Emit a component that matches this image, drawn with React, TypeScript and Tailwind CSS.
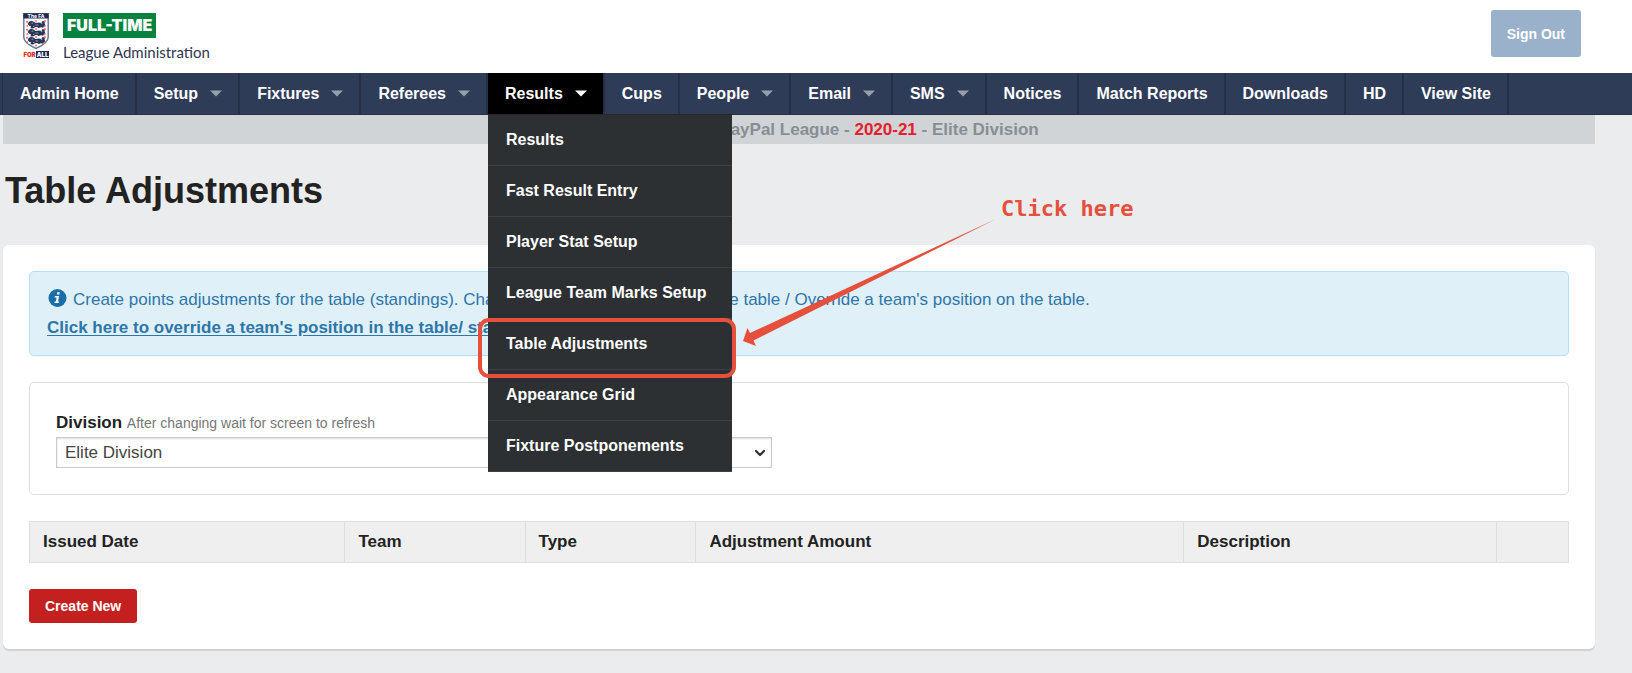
import React from 'react';
import { ChevronDown } from 'lucide-react';

interface NavItem {
  label: string;
  hasMenu?: boolean;
}

const navItems: NavItem[] = [
  { label: 'Admin Home' },
  { label: 'Setup', hasMenu: true },
  { label: 'Fixtures', hasMenu: true },
  { label: 'Referees', hasMenu: true },
  { label: 'Results', hasMenu: true },
  { label: 'Cups' },
  { label: 'People', hasMenu: true },
  { label: 'Email', hasMenu: true },
  { label: 'SMS', hasMenu: true },
  { label: 'Notices' },
  { label: 'Match Reports' },
  { label: 'Downloads' },
  { label: 'HD' },
  { label: 'View Site' },
];

const resultsMenu = [
  'Results',
  'Fast Result Entry',
  'Player Stat Setup',
  'League Team Marks Setup',
  'Table Adjustments',
  'Appearance Grid',
  'Fixture Postponements',
];

const columns = [
  { label: 'Issued Date', width: 'w-[20.5%]' },
  { label: 'Team', width: 'w-[11.7%]' },
  { label: 'Type', width: 'w-[11.1%]' },
  { label: 'Adjustment Amount', width: 'w-[31.7%]' },
  { label: 'Description', width: 'w-[20.3%]' },
  { label: '', width: 'w-[4.7%]' },
];

const Lion: React.FC<{ y: number }> = ({ y }) => (
  <g transform={`translate(0 ${y})`}>
    <path
      d="M3.600 4 5 1.800 7.400.8l2.400 1 1.800 1.200 3.200-.4 2.600.4L18.600 1l2.400.4-.4 1.800.9 2.200-1.700 1-.6 1.400-2.200-.6-2.400.9-1.600-1.200-2 .3-1.800 1.300-2.800-.3.800-1.800-2-.6z"
      fill="#2a3558"
    />
    <path d="M7.400 3.200h1.800M11.600 5h2.600M16.800 3.600h1.600M9 6.400h1.400" stroke="#aeb5c6" strokeWidth=".8" />
    <circle cx="3" cy="1.800" r="1.100" fill="#f0746c" />
    <circle cx="21" cy="1" r="1.100" fill="#f0746c" />
    <circle cx="12" cy=".9" r="1" fill="#f0746c" />
    <circle cx="3.400" cy="6" r=".9" fill="#f0746c" />
    <circle cx="20.600" cy="6.400" r=".9" fill="#f0746c" />
  </g>
);

const Crest = () => (
  <div className="flex w-[26px] flex-col items-center font-[Inter,sans-serif]">
    <div className="relative">
      <svg width="26" height="36" viewBox="0 0 26 36" aria-hidden="true">
        <path d="M.8.5h24.4v24c0 5-5.500 8-12.200 11C6.300 32.500.8 29.500.8 24.500z" fill="#fff" stroke="#66718f" strokeWidth="1.400" />
        <path d="M.4.3h25.200v5.200H.4z" fill="#1d2b52" />
        <g transform="translate(1 7)">
          <Lion y={0} />
          <Lion y={8} />
          <Lion y={16} />
        </g>
        <circle cx="13" cy="32.600" r="1" fill="#f0746c" />
      </svg>
      <span className="absolute inset-x-0 top-0 text-center text-[5px] leading-[6px] font-bold text-white">The FA</span>
    </div>
    <div className="mt-[2px] flex w-full text-[6px] leading-[7px] font-black">
      <span className="flex-1 text-center text-[#e8261c]">FOR</span>
      <span className="flex-1 bg-[#1d2b52] text-center text-white">ALL</span>
    </div>
  </div>
);

const Caret: React.FC<{ active: boolean }> = ({ active }) => (
  <svg width="12" height="7" viewBox="0 0 12 7" className={active ? 'text-white' : 'text-[#979eac]'} aria-hidden="true">
    <path d="M0 .5h12L6 6.500z" fill="currentColor" />
  </svg>
);

/* Callout drawn around one entry of the open menu */
const Callout = () => (
  <>
    <span className="pointer-events-none absolute -top-px -right-1 -bottom-[9px] -left-[10px] z-20 rounded-[11px] border-4 border-[#e64f3b]" />
    <svg
      width="260"
      height="132"
      viewBox="0 0 260 132"
      className="pointer-events-none absolute -top-[102px] left-[251px] z-20"
      aria-hidden="true"
    >
      <path d="M4 124 8.500 111 11 116 257 2 14.500 123.500 17 129z" fill="#e64f3b" />
    </svg>
    <span className="pointer-events-none absolute -top-[124px] left-[513px] z-20 font-['DejaVu_Sans_Mono',monospace] text-[22px] leading-7 font-bold whitespace-nowrap text-[#e64f3b]">
      Click here
    </span>
  </>
);

const ResultsMenu = () => (
  <ul className="absolute top-full left-0 z-10 w-[244px] border-t border-[#26282b] bg-[#2d3033]">
    {resultsMenu.map((label) => (
      <li key={label} className="relative border-b border-[#3e4144]">
        <a href="#" className="flex h-[50px] items-center pl-[18px] text-white">
          {label}
        </a>
        {label === 'Table Adjustments' && <Callout />}
      </li>
    ))}
  </ul>
);

const MainNav = () => (
  <nav className="border-b border-[#26324a] bg-[#2f3c58] pl-[2px] text-base font-bold">
    <ul className="flex border-l border-[#253047]">
      {navItems.map(({ label, hasMenu }) => {
        const active = label === 'Results';
        return (
          <li key={label} className="relative border-r-2 border-[#253047]">
            <a
              href="#"
              className={`flex h-[41px] items-center gap-3 pr-4 pl-[17px] whitespace-nowrap text-white ${active ? 'bg-black' : ''}`}
            >
              {label}
              {hasMenu && <Caret active={active} />}
            </a>
            {active && <ResultsMenu />}
          </li>
        );
      })}
    </ul>
  </nav>
);

const App = () => {
  return (
    <div className="min-h-screen bg-[#ebeced] font-['Liberation_Sans',Arial,sans-serif] text-[17px] leading-7 text-[#222]">
      <header className="flex items-start justify-between bg-white pr-[51px] pb-[7px] pl-[23px]">
        <a href="#" className="flex gap-[14px] pt-[13px]">
          <Crest />
          <span className="flex flex-col items-start">
            <span className="bg-[#06843f] px-1 font-[Inter,sans-serif] text-base leading-[25px] font-black text-white">FULL-TIME</span>
            <span className="font-[Lato,sans-serif] text-[15px] leading-7 text-[#2f3652]">League Administration</span>
          </span>
        </a>
        <button className="mt-[10px] h-[47px] rounded-[3px] bg-[#9ab1cb] px-4 text-sm font-bold text-white">Sign Out</button>
      </header>

      <MainNav />

      <main className="mr-[37px] ml-[3px]">
        <div className="bg-[#d0d4d6] pl-[160px] text-center leading-[29px] font-bold text-[#878e95]">
          PayPal League - <span className="text-[#e3202b]">2020-21</span> - Elite Division
        </div>

        <h1 className="pt-6 pb-8 pl-[2px] text-4xl leading-[45px] font-bold">Table Adjustments</h1>

        <div className="flex flex-col items-start gap-[26px] rounded-md bg-white p-[26px] shadow-[0_2px_1px_#cfd1d3]">
          <div className="w-full rounded-[5px] border border-[#b6def4] bg-[#dff0f9] px-[17px] pt-[14px] pb-[13px] text-[#2d76a8]">
            <p>
              <svg width="20" height="20" viewBox="0 0 20 20" className="mr-[6px] mb-[6px] inline-block" aria-hidden="true">
                <circle cx="10.500" cy="10" r="9" fill="#1a6ea8" />
                <path d="M10.300 4.300h2.500l-.5 2.200H9.800zM8 8h4.200l-1.300 5.400h1.200l-.4 1.600H7.400l.4-1.600h1L9.700 9.600H7.600z" fill="#fff" />
              </svg>
              Create points adjustments for the table (standings). Changes a team's points total on the table / Override a
              team's position on the table.
            </p>
            <a href="#" className="font-bold underline underline-offset-2">
              Click here to override a team's position in the table/ standings
            </a>
          </div>

          <div className="w-full rounded-[5px] border border-[#dfe0e1] p-[26px]">
            <label htmlFor="division" className="block">
              <span className="font-bold">Division</span> <span className="text-sm text-[#777]">After changing wait for screen to refresh</span>
            </label>
            <div className="relative w-[716px] max-w-full">
              <select
                id="division"
                className="block h-[31px] w-full appearance-none border border-[#c9cacb] bg-white px-2 leading-6 text-[#444] shadow-[inset_0_1px_2px_#ddd]"
              >
                <option>Elite Division</option>
              </select>
              <ChevronDown size={16} strokeWidth={3.5} className="pointer-events-none absolute top-2 right-1 text-[#333]" />
            </div>
          </div>

          <table className="w-full table-fixed border-collapse bg-[#efefef]">
            <thead>
              <tr>
                {columns.map(({ label, width }) => (
                  <th key={width} className={`${width} h-[41px] border border-[#dedede] px-[13px] text-left font-bold`}>
                    {label}
                  </th>
                ))}
              </tr>
            </thead>
          </table>

          <button className="h-[34px] rounded-[3px] bg-[#c52020] px-4 text-sm font-bold text-white">Create New</button>
        </div>
      </main>
    </div>
  );
};

export default App;
